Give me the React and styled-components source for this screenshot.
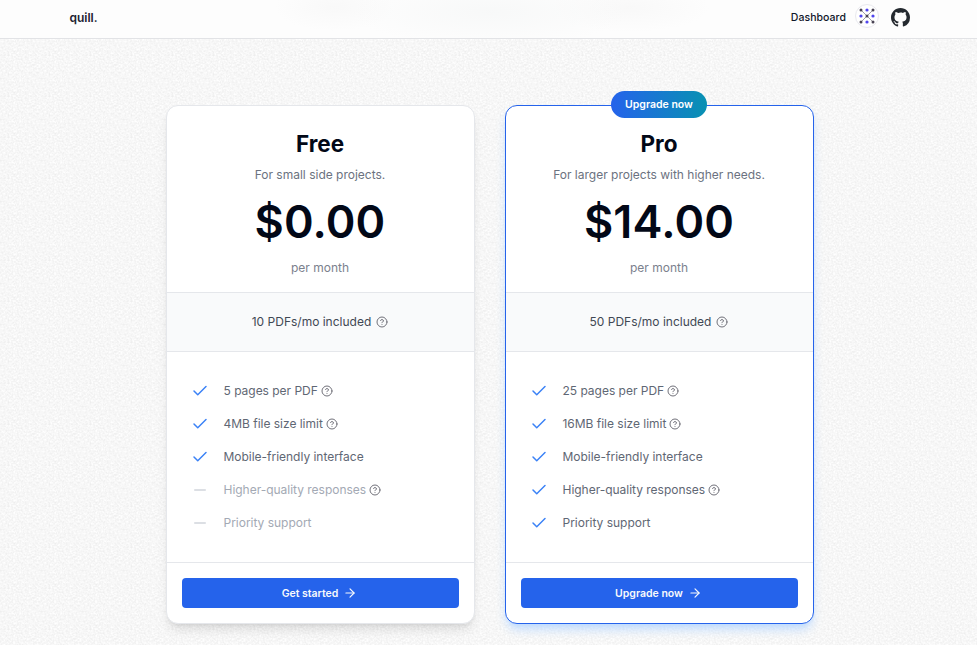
import React from "react";
import styled, { createGlobalStyle, css } from "styled-components";
import { ArrowRight, Check, CircleHelp, Minus } from "lucide-react";

const grain = encodeURIComponent(
  `<svg xmlns='http://www.w3.org/2000/svg' width='41' height='41'><filter id='n' x='0' y='0' width='100%' height='100%' color-interpolation-filters='sRGB'><feTurbulence type='fractalNoise' baseFrequency='.5' numOctaves='2' seed='8' stitchTiles='stitch'/><feColorMatrix values='.1 0 0 0 .918 .1 0 0 0 .918 .1 0 0 0 .918 0 0 0 0 1'/></filter><rect width='41' height='41' filter='url(#n)'/></svg>`
);

const GlobalStyle = createGlobalStyle`
  *, *::before, *::after { box-sizing: border-box; }
  body {
    margin: 0;
    overflow: hidden;
    color: #020817;
    font-family: Inter, sans-serif;
    background: #f7f7f7 url("data:image/svg+xml,${grain}");
  }
`;

const Page = styled.div`
  height: 645px;
  overflow: hidden;
`;

const Nav = styled.header`
  height: 39px;
  display: flex;
  align-items: center;
  justify-content: space-between;
  padding: 0 67px 4px 69.5px;
  border-bottom: 1px solid #e2e3e6;
  background:
    radial-gradient(ellipse 140px 34px at 490px 12px, rgba(247, 248, 248, 0.9), transparent),
    radial-gradient(ellipse 60px 24px at 335px 7px, rgba(248, 248, 248, 0.9), transparent),
    radial-gradient(ellipse 80px 24px at 630px 8px, rgba(248, 248, 248, 0.9), transparent),
    #fdfdfd;
`;

const Brand = styled.span`
  margin-top: 2px;
  color: #1c2130;
  font-size: 12px;
  line-height: 18px;
  font-weight: 600;
`;

const NavLinks = styled.div`
  display: flex;
  align-items: center;
`;

const NavLink = styled.span`
  color: #10162a;
  font-size: 10.5px;
  line-height: 15px;
  font-weight: 450;
  letter-spacing: 0.05px;
`;

const Avatar = styled.span`
  width: 24px;
  height: 24px;
  margin: -2px 12px 0 9px;
  border: 1px solid #e9e9ee;
  border-radius: 50%;
  display: grid;
  place-items: center;
  background: #fff;
`;

const Plans = styled.main`
  display: grid;
  grid-template-columns: 309px 309px;
  gap: 30px;
  padding: 66px 0 0 166px;
`;

const Card = styled.section`
  position: relative;
  height: 519px;
  display: flex;
  flex-direction: column;
  border: 1px solid #e5e7eb;
  border-radius: 12px;
  background: #fff;
  box-shadow: 0 8px 11px -2px rgba(0, 0, 0, 0.1), 0 3px 5px -3px rgba(0, 0, 0, 0.1);
  ${(p) =>
    p.$featured &&
    css`
      border-color: #2563eb;
      box-shadow: 0 7px 11px -2px #bfdbfe, 0 3px 5px -3px #bfdbfe;
    `}
`;

const Badge = styled.div`
  position: absolute;
  top: -15px;
  left: 105px;
  width: 96px;
  height: 27px;
  border-radius: 14px;
  display: grid;
  place-items: center;
  color: #fff;
  font-size: 10.5px;
  font-weight: 600;
  background: linear-gradient(to right, #2563eb, #0891b2);
`;

const Intro = styled.div`
  height: 186px;
  padding: 24px 1px 0 0;
  text-align: center;
`;

const PlanName = styled.h3`
  margin: 0;
  font-size: 22.5px;
  line-height: 27px;
  font-weight: 700;
`;

const Tagline = styled.p`
  margin: 9px 0 0;
  color: #6b7280;
  font-size: 12px;
  line-height: 18px;
`;

const Price = styled.p`
  margin: 15px 0 0;
  font-size: 45px;
  line-height: 45px;
  font-weight: 600;
  letter-spacing: 0.15px;
`;

const Period = styled.p`
  margin: 15px 0 0;
  color: #7b818d;
  font-size: 12px;
  line-height: 18px;
`;

const Quota = styled.div`
  height: 60px;
  display: flex;
  align-items: center;
  justify-content: center;
  gap: 5px;
  padding: 0 1px 1px 0;
  border: solid #e5e7eb;
  border-width: 1px 0;
  background: #f9fafb;
  color: #414854;
  font-size: 12px;
`;

const Features = styled.ul`
  list-style: none;
  margin: 0;
  padding: 30px 24px 0;
  height: 210px;
  display: flex;
  flex-direction: column;
  gap: 15px;
`;

const Feature = styled.li`
  height: 18px;
  display: flex;
  align-items: center;
  color: ${(p) => (p.$muted ? "#a3a9b4" : "#5f6774")};
  font-size: 12px;
  line-height: 18px;
  letter-spacing: -0.02px;
`;

const Mark = styled.span`
  display: flex;
  width: 32.5px;
  color: ${(p) => (p.$muted ? "#d1d5db" : "#3b82f6")};
`;

const Hint = styled(CircleHelp).attrs({ size: 12, strokeWidth: 2 })`
  flex: none;
  margin-left: ${(p) => (p.$inline ? "0" : "3px")};
  color: #71717a;
`;

const CardFooter = styled.div`
  border-top: 1px solid #e5e7eb;
  padding: 15px;
`;

const Button = styled.button`
  width: 100%;
  height: 30px;
  display: flex;
  align-items: center;
  justify-content: center;
  gap: 5px;
  padding: 0 2px 0 0;
  border: 0;
  border-radius: 4px;
  background: #2563eb;
  color: #f8fafc;
  font: 600 10.5px/15px Inter, sans-serif;
`;

const PatternMark = () => (
  <svg width="16" height="16" viewBox="0 0 16 16">
    <path d="M2 2l12 12M14 2L2 14" stroke="#77737e" strokeWidth=".7" />
    <g fill="#494353">
      <circle cx="2" cy="2" r="1.5" />
      <circle cx="14" cy="2" r="1.5" />
      <circle cx="8" cy="8" r="1.5" />
      <circle cx="2" cy="14" r="1.5" />
      <circle cx="14" cy="14" r="1.5" />
    </g>
    <g fill="#5146ee">
      <circle cx="8" cy="2" r="1.6" />
      <circle cx="2" cy="8" r="1.6" />
      <circle cx="14" cy="8" r="1.6" />
      <circle cx="8" cy="14" r="1.6" />
    </g>
  </svg>
);

const GithubMark = () => (
  <svg width="19" height="19" viewBox="0 0 16 16" fill="#24292f">
    <path d="M8 0C3.58 0 0 3.58 0 8c0 3.54 2.29 6.53 5.47 7.59.4.07.55-.17.55-.38 0-.19-.01-.82-.01-1.49-2.01.37-2.53-.49-2.69-.94-.09-.23-.48-.94-.82-1.13-.28-.15-.68-.52-.01-.53.63-.01 1.08.58 1.23.82.72 1.21 1.87.87 2.33.66.07-.52.28-.87.51-1.07-1.78-.2-3.64-.89-3.64-3.95 0-.87.31-1.59.82-2.15-.08-.2-.36-1.02.08-2.12 0 0 .67-.21 2.2.82A7.7 7.7 0 0 1 8 3.86c.68 0 1.36.09 2 .27 1.53-1.04 2.2-.82 2.2-.82.44 1.1.16 1.92.08 2.12.51.56.82 1.27.82 2.15 0 3.07-1.87 3.75-3.65 3.95.29.25.54.73.54 1.48 0 1.07-.01 1.93-.01 2.2 0 .21.15.46.55.38A8.01 8.01 0 0 0 16 8c0-4.42-3.58-8-8-8z" />
  </svg>
);

const plans = [
  {
    name: "Free",
    tagline: "For small side projects.",
    price: "$0.00",
    quota: "10 PDFs/mo included",
    action: "Get started",
    features: [
      { text: "5 pages per PDF", hint: true },
      { text: "4MB file size limit", hint: true },
      { text: "Mobile-friendly interface" },
      { text: "Higher-quality responses", hint: true, muted: true },
      { text: "Priority support", muted: true },
    ],
  },
  {
    name: "Pro",
    tagline: "For larger projects with higher needs.",
    price: "$14.00",
    quota: "50 PDFs/mo included",
    action: "Upgrade now",
    featured: true,
    features: [
      { text: "25 pages per PDF", hint: true },
      { text: "16MB file size limit", hint: true },
      { text: "Mobile-friendly interface" },
      { text: "Higher-quality responses", hint: true },
      { text: "Priority support" },
    ],
  },
];

const PlanCard = ({ plan }) => (
  <Card $featured={plan.featured}>
    {plan.featured && <Badge>Upgrade now</Badge>}
    <Intro>
      <PlanName>{plan.name}</PlanName>
      <Tagline>{plan.tagline}</Tagline>
      <Price>{plan.price}</Price>
      <Period>per month</Period>
    </Intro>
    <Quota>
      <span>{plan.quota}</span>
      <Hint $inline />
    </Quota>
    <Features>
      {plan.features.map((f) => (
        <Feature key={f.text} $muted={f.muted}>
          <Mark $muted={f.muted}>{f.muted ? <Minus size={18} /> : <Check size={18} />}</Mark>
          <span>{f.text}</span>
          {f.hint && <Hint />}
        </Feature>
      ))}
    </Features>
    <CardFooter>
      <Button>
        {plan.action}
        <ArrowRight size={14} />
      </Button>
    </CardFooter>
  </Card>
);

export default function App() {
  return (
    <Page>
      <GlobalStyle />
      <Nav>
        <Brand>quill.</Brand>
        <NavLinks>
          <NavLink>Dashboard</NavLink>
          <Avatar>
            <PatternMark />
          </Avatar>
          <GithubMark />
        </NavLinks>
      </Nav>
      <Plans>
        {plans.map((plan) => (
          <PlanCard key={plan.name} plan={plan} />
        ))}
      </Plans>
    </Page>
  );
}
